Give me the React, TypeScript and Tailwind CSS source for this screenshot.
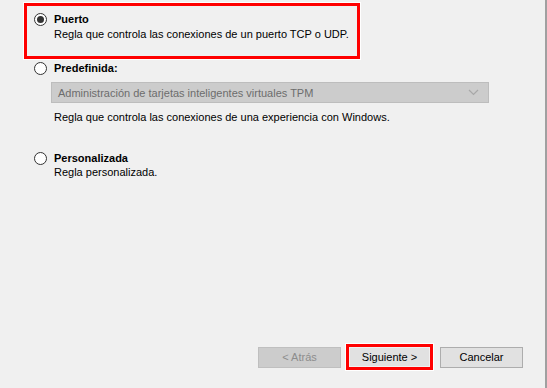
import React from "react";

const Radio = ({ checked }: { checked?: boolean }) => (
  <div className="w-[13px] h-[13px] rounded-full border border-[#333333] bg-white flex items-center justify-center shrink-0">
    {checked && <div className="w-[7px] h-[7px] rounded-full bg-[#333333]" />}
  </div>
);

const options = {
  port: "Regla que controla las conexiones de un puerto TCP o UDP.",
  predefined: "Regla que controla las conexiones de una experiencia con Windows.",
  custom: "Regla personalizada.",
};

export default function App() {
  return (
    <div
      className="w-[547px] h-[388px] bg-[#f0f0f0] flex flex-col text-[11px] leading-[14px] text-black border-r-2 border-[#a0a0a0]"
      style={{ fontFamily: '"Liberation Sans", Arial, sans-serif' }}
    >
      <div className="ml-[23px] mt-[2px] w-[338px] h-[58px] border border-white">
        <div className="h-full border-[3px] border-[#ff0000] pl-[7px] pt-[6px] flex gap-[7px]">
          <div className="pt-[1px]">
            <Radio checked />
          </div>
          <div className="flex flex-col">
            <span className="font-bold leading-[15px]">Puerto</span>
            <span>{options.port}</span>
          </div>
        </div>
      </div>

      <div className="ml-[34px] flex gap-[7px] items-center">
        <Radio />
        <span className="font-bold leading-[16px]">Predefinida:</span>
      </div>
      <div className="ml-[51px] mt-[6px] w-[438px] h-[21px] bg-[#cccccc] border border-[#bdbdbd] flex items-center justify-between px-[6px] text-[#6d6d6d]">
        <span>Administración de tarjetas inteligentes virtuales TPM</span>
        <svg width="11" height="7" viewBox="0 0 11 7" className="mr-[3px]">
          <path d="M1 1 L5.5 5.5 L10 1" stroke="#a8a8a8" strokeWidth="1.2" fill="none" />
        </svg>
      </div>
      <div className="ml-[54px] mt-[7px]">{options.predefined}</div>

      <div className="ml-[34px] mt-[27px] flex gap-[7px]">
        <div className="pt-[1px]">
          <Radio />
        </div>
        <div className="flex flex-col">
          <span className="font-bold leading-[14px]">Personalizada</span>
          <span>{options.custom}</span>
        </div>
      </div>

      <div className="mt-auto mb-[17px] flex items-center justify-end pr-[22px]">
        <button className="w-[83px] h-[21px] bg-[#cccccc] border border-[#bfbfbf] text-[#8d8d8d] text-[11px]">
          &lt; Atrás
        </button>
        <div className="ml-[4px] border border-white">
          <div className="border-[3px] border-[#ff0000] p-[1px]">
            <button className="w-[79px] h-[18px] bg-[#e1e1e1] text-[11px] leading-[14px]">
              Siguiente &gt;
            </button>
          </div>
        </div>
        <button className="ml-[6px] w-[83px] h-[21px] bg-[#e1e1e1] border border-[#adadad] text-[11px]">
          Cancelar
        </button>
      </div>
    </div>
  );
}
